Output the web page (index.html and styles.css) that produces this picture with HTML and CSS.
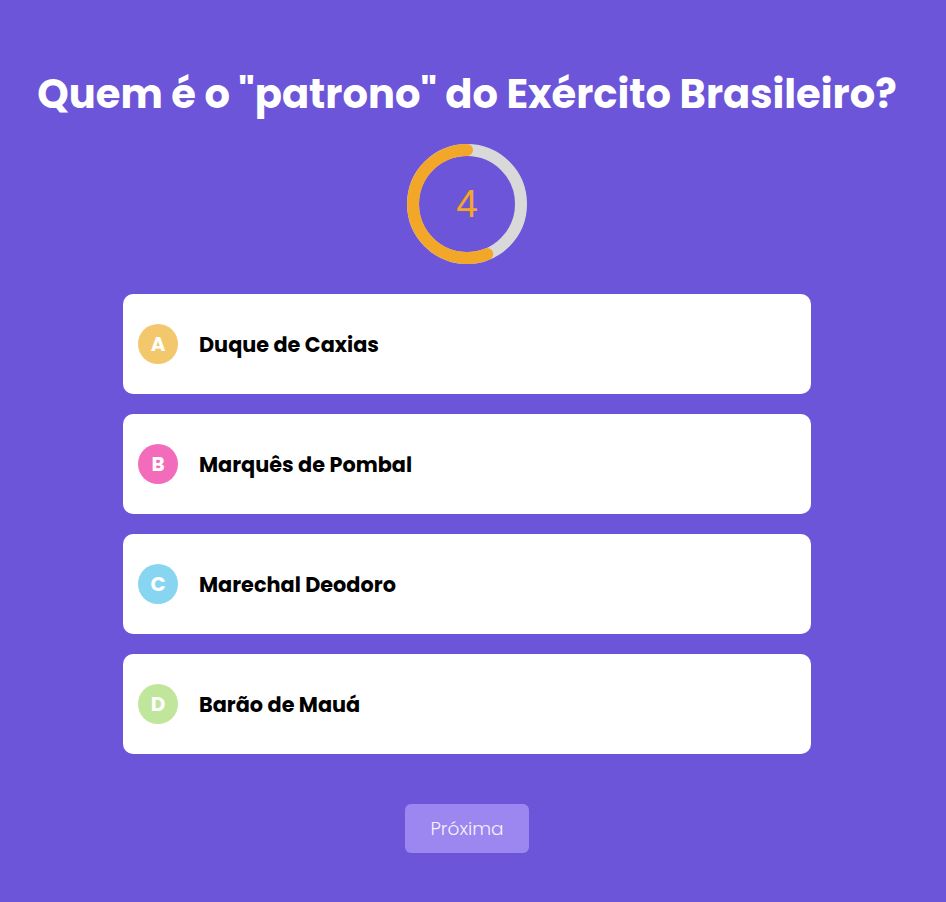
FILE: index.html
```html
<!DOCTYPE html>
<html lang="pt-BR">
<head>
<meta charset="utf-8">
<title>Quiz</title>
<link rel="stylesheet" href="styles.css">
</head>
<body>
<main class="page">
  <h1 class="question">Quem é o "patrono" do Exército Brasileiro?</h1>
  <div class="timer">
    <svg class="ring" width="120" height="120" viewBox="0 0 120 120">
      <circle cx="60" cy="60" r="54" fill="none" stroke="#d9d9d9" stroke-width="12"/>
      <path d="M60 6 A54 54 0 1 0 80.2 110.1" fill="none" stroke="#f2a729" stroke-width="12" stroke-linecap="round"/>
    </svg>
    <span class="count">4</span>
  </div>
  <ul class="options">
    <li class="option"><span class="badge badge-a">A</span><span class="label">Duque de Caxias</span></li>
    <li class="option"><span class="badge badge-b">B</span><span class="label">Marquês de Pombal</span></li>
    <li class="option"><span class="badge badge-c">C</span><span class="label">Marechal Deodoro</span></li>
    <li class="option"><span class="badge badge-d">D</span><span class="label">Barão de Mauá</span></li>
  </ul>
  <button class="next" type="button">Próxima</button>
</main>
</body>
</html>
```
FILE: styles.css
```css
* { box-sizing: border-box; }
html, body { margin: 0; }
body {
  background: #6c55d8;
  font-family: "Poppins", "Open Sans", sans-serif;
  min-height: 902px;
  padding-right: 12px;
}
.page {
  display: flex;
  flex-direction: column;
  align-items: center;
  padding-top: 64px;
}
.question {
  margin: 0;
  color: #fff;
  font-size: 40px;
  font-weight: 700;
  line-height: 60px;
  white-space: nowrap;
}
.timer {
  position: relative;
  width: 120px;
  height: 120px;
  margin-top: 20px;
}
.ring { display: block; }
.count {
  position: absolute;
  inset: 0;
  display: flex;
  align-items: center;
  justify-content: center;
  font-family: "Liberation Sans", Arial, sans-serif;
  font-size: 39px;
  color: #f2a729;
}
.options {
  list-style: none;
  margin: 30px 0 0;
  padding: 0;
  width: 688px;
  display: flex;
  flex-direction: column;
  gap: 20px;
}
.option {
  height: 100px;
  background: #fff;
  border-radius: 10px;
  display: flex;
  align-items: center;
  gap: 21px;
  padding-left: 15px;
}
.badge {
  width: 40px;
  height: 40px;
  border-radius: 50%;
  display: flex;
  align-items: center;
  justify-content: center;
  color: #fff;
  font-weight: 700;
  font-size: 20px;
  line-height: 1;
}
.badge-a { background: #f3c76b; }
.badge-b { background: #f36cbc; }
.badge-c { background: #88d5f2; }
.badge-d { background: #c0e69b; }
.label {
  color: #000;
  font-size: 20.8px;
  font-weight: 700;
}
.next {
  margin-top: 50px;
  width: 124px;
  height: 49px;
  border: none;
  border-radius: 6px;
  background: #9b87ef;
  color: #f4f1ff;
  font-family: inherit;
  font-size: 18.5px;
  font-weight: 300;
}
```
